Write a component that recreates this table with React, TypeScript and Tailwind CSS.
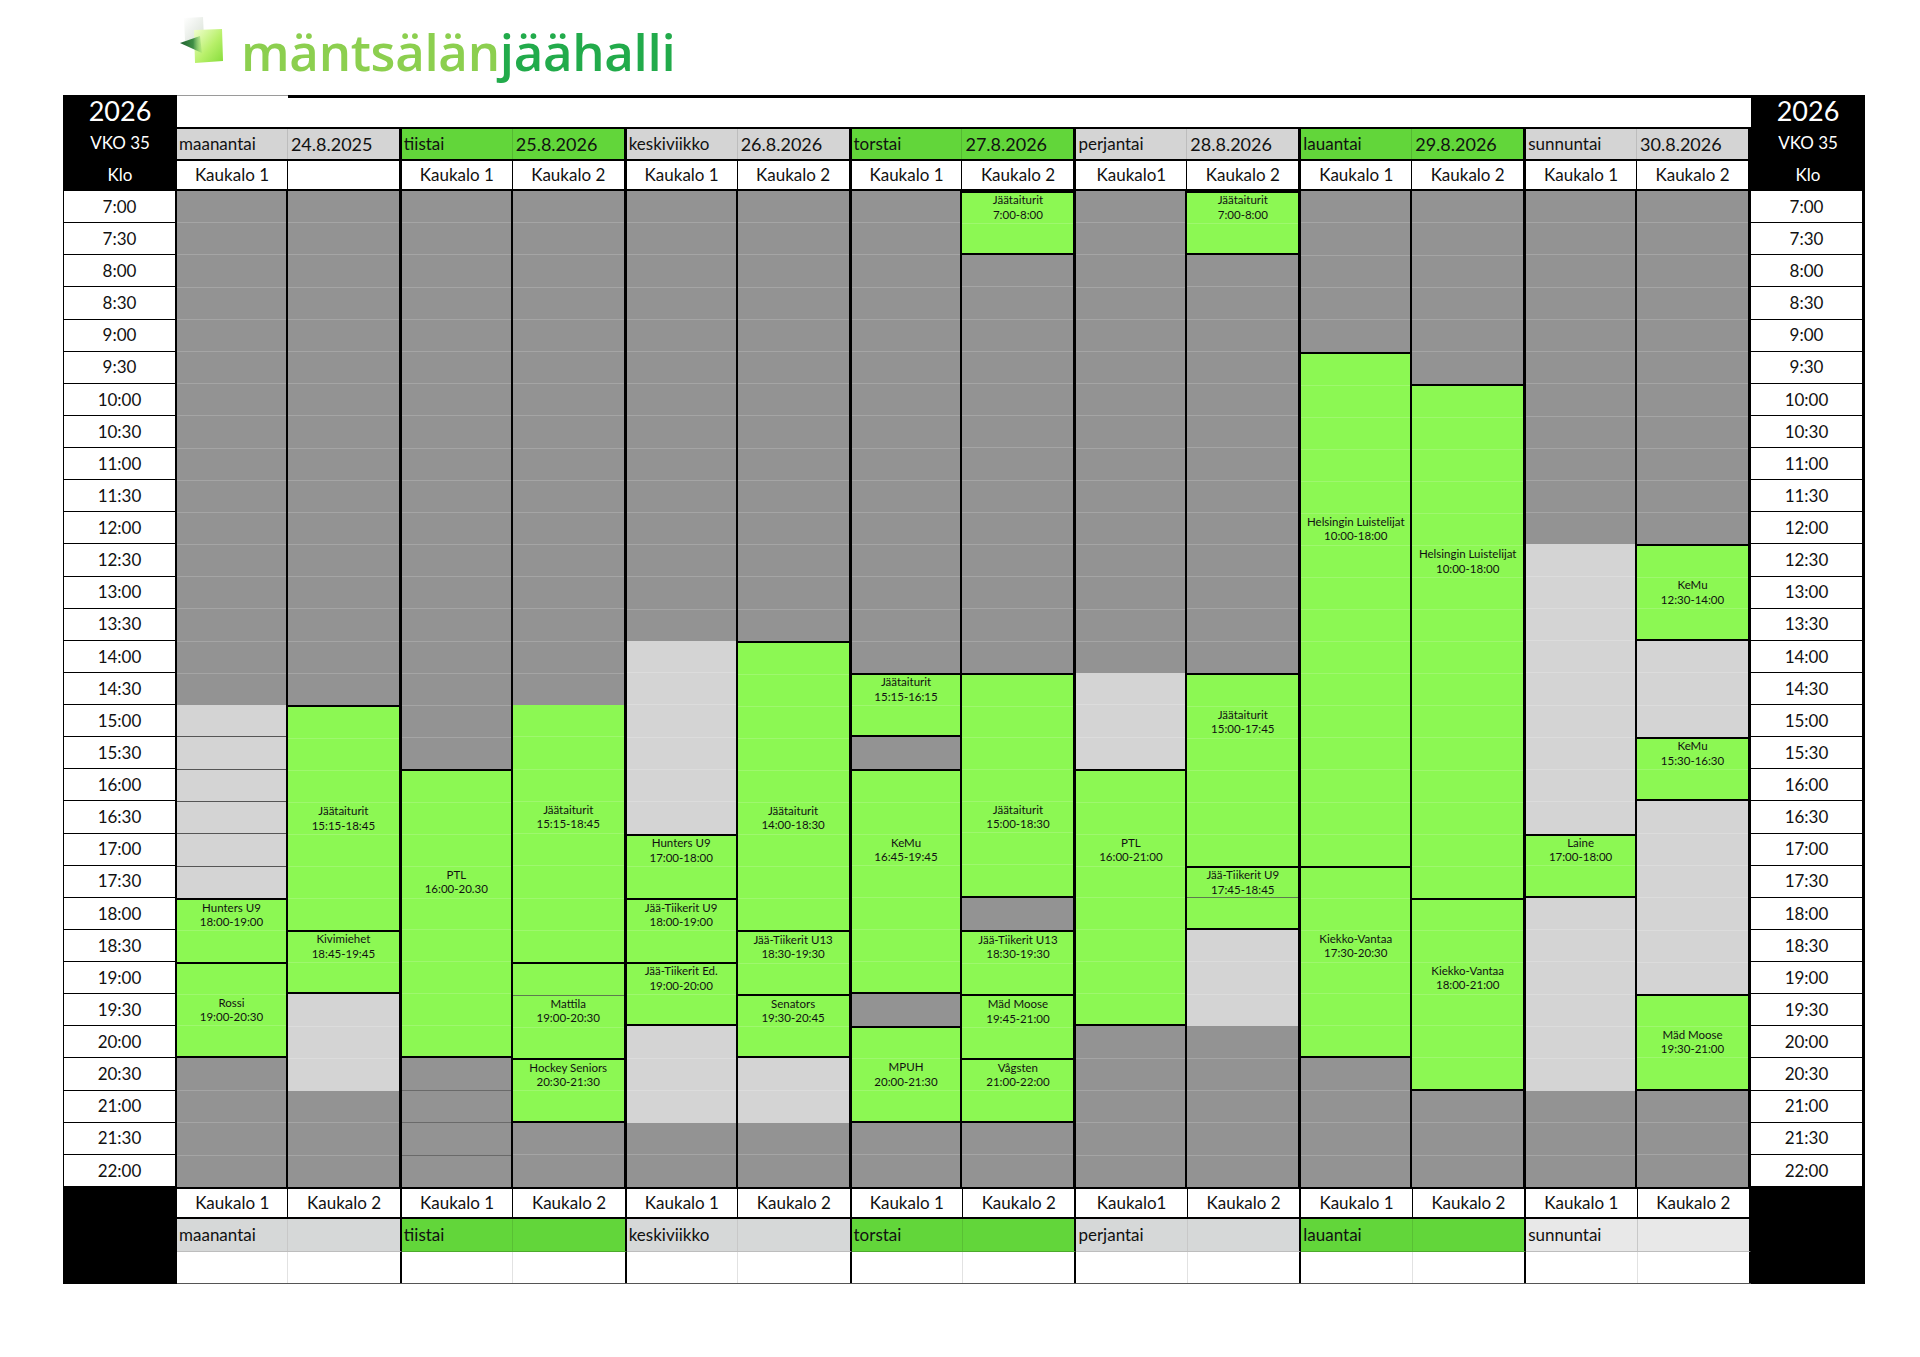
import React from "react";

const ROW = 32.13;

type Seg = {
  t: "c" | "f" | "b";
  n: number;
  name?: string;
  time?: string;
  k?: number;
  lines?: "dark";
  inner?: number;
  nt?: boolean;
};

// c = suljettu (tummanharmaa), f = vapaa (vaaleanharmaa), b = varattu (vihreä)
const c = (n: number, lines?: "dark"): Seg => ({ t: "c", n, lines });
const f = (n: number, lines?: "dark"): Seg => ({ t: "f", n, lines });
const b = (n: number, name: string, time: string, k = 0, extra: Partial<Seg> = {}): Seg => ({ t: "b", n, name, time, k, ...extra });

const days = [
  {
    name: "maanantai",
    date: "24.8.2025",
    green: false,
    top: ["Kaukalo 1", ""],
    cols: [
      [c(16), f(6, "dark"), b(2, "Hunters U9", "18:00-19:00"), b(3, "Rossi", "19:00-20:30", 1), c(4)],
      [c(16), b(7, "Jäätaiturit", "15:15-18:45", 3), b(2, "Kivimiehet", "18:45-19:45"), f(3), c(3)],
    ],
  },
  {
    name: "tiistai",
    date: "25.8.2026",
    green: true,
    top: ["Kaukalo 1", "Kaukalo 2"],
    cols: [
      [c(18), b(9, "PTL", "16:00-20.30", 3), c(4, "dark")],
      [
        c(16),
        b(8, "Jäätaiturit", "15:15-18:45", 3, { nt: true }),
        b(3, "Mattila", "19:00-20:30", 1, { inner: 1 }),
        b(2, "Hockey Seniors", "20:30-21:30"),
        c(2),
      ],
    ],
  },
  {
    name: "keskiviikko",
    date: "26.8.2026",
    green: false,
    top: ["Kaukalo 1", "Kaukalo 2"],
    cols: [
      [
        c(14),
        f(6),
        b(2, "Hunters U9", "17:00-18:00"),
        b(2, "Jää-Tiikerit U9", "18:00-19:00"),
        b(2, "Jää-Tiikerit Ed.", "19:00-20:00"),
        f(3),
        c(2),
      ],
      [c(14), b(9, "Jäätaiturit", "14:00-18:30", 5), b(2, "Jää-Tiikerit U13", "18:30-19:30"), b(2, "Senators", "19:30-20:45"), f(2), c(2)],
    ],
  },
  {
    name: "torstai",
    date: "27.8.2026",
    green: true,
    top: ["Kaukalo 1", "Kaukalo 2"],
    cols: [
      [c(15), b(2, "Jäätaiturit", "15:15-16:15"), c(1), b(7, "KeMu", "16:45-19:45", 2), c(1), b(3, "MPUH", "20:00-21:30", 1), c(2)],
      [
        b(2, "Jäätaiturit", "7:00-8:00"),
        c(13),
        b(7, "Jäätaiturit", "15:00-18:30", 4),
        c(1),
        b(2, "Jää-Tiikerit U13", "18:30-19:30"),
        b(2, "Mäd Moose", "19:45-21:00"),
        b(2, "Vågsten", "21:00-22:00"),
        c(2),
      ],
    ],
  },
  {
    name: "perjantai",
    date: "28.8.2026",
    green: false,
    top: ["Kaukalo1", "Kaukalo 2"],
    cols: [
      [c(15), f(3), b(8, "PTL", "16:00-21:00", 2), c(5)],
      [
        b(2, "Jäätaiturit", "7:00-8:00"),
        c(13),
        b(6, "Jäätaiturit", "15:00-17:45", 1),
        b(2, "Jää-Tiikerit U9", "17:45-18:45", 0, { inner: 1 }),
        f(3),
        c(5),
      ],
    ],
  },
  {
    name: "lauantai",
    date: "29.8.2026",
    green: true,
    top: ["Kaukalo 1", "Kaukalo 2"],
    cols: [
      [c(5), b(16, "Helsingin Luistelijat", "10:00-18:00", 5), b(6, "Kiekko-Vantaa", "17:30-20:30", 2), c(4)],
      [c(6), b(16, "Helsingin Luistelijat", "10:00-18:00", 5), b(6, "Kiekko-Vantaa", "18:00-21:00", 2), c(3)],
    ],
  },
  {
    name: "sunnuntai",
    date: "30.8.2026",
    green: false,
    top: ["Kaukalo 1", "Kaukalo 2"],
    cols: [
      [c(11), f(9), b(2, "Laine", "17:00-18:00"), f(6), c(3)],
      [c(11), b(3, "KeMu", "12:30-14:00", 1), f(3), b(2, "KeMu", "15:30-16:30"), f(6), b(3, "Mäd Moose", "19:30-21:00", 1), c(3)],
    ],
  },
];

const times = Array.from({ length: 31 }, (_, i) => `${7 + Math.floor(i / 2)}:${i % 2 ? "30" : "00"}`);

function Segment({ s, next }: { s: Seg; next?: Seg }) {
  const booked = s.t === "b";
  const bg = booked ? "bg-[#8cf853]" : s.t === "f" ? "bg-[#d4d4d4]" : "bg-[#939393]";
  let line = "border-[#a5a5a5]";
  if (s.t === "c" && s.lines === "dark") line = "border-[#6a6a6a]";
  if (s.t === "f") line = s.lines === "dark" ? "border-[#555555]" : "border-[#dcdcdc]";
  if (booked) line = "border-[#9ef86e]";
  const edges = booked
    ? `border-black ${s.nt ? "" : "border-t-2"} ${!next || next.t !== "b" ? "border-b-2" : ""}`
    : "";

  return (
    <div className={`flex flex-col ${bg} ${edges}`} style={{ height: s.n * ROW }}>
      {Array.from({ length: s.n }, (_, i) => (
        <div
          key={i}
          className={`flex-1 min-h-0 flex flex-col items-center justify-center overflow-visible ${
            i > 0 ? `border-t ${i === s.inner ? "border-[#5d7b4f]" : line}` : ""
          }`}
        >
          {booked && i === s.k && (
            <div className="flex flex-col items-center text-[11.5px] leading-[14.5px] text-[#111] whitespace-nowrap">
              <span>{s.name}</span>
              <span>{s.time}</span>
            </div>
          )}
        </div>
      ))}
    </div>
  );
}

function TimeColumn({ side }: { side: "left" | "right" }) {
  return (
    <div className="w-[114px] flex flex-col">
      <div className="bg-black text-white h-[96px] flex flex-col">
        <div className="h-[32px] flex items-center justify-center text-[27px]">2026</div>
        <div className="h-[32px] flex items-center justify-center text-[17px]">VKO 35</div>
        <div className="h-[32px] flex items-center justify-center text-[17px]">Klo</div>
      </div>
      <div className={`bg-white flex flex-col border-black ${side === "left" ? "border-l border-r-2" : "border-r-[3px]"}`}>
        {times.map((t) => (
          <div key={t} className="h-[32.13px] border-b border-black flex items-center justify-center text-[17px] text-[#111]">
            {t}
          </div>
        ))}
      </div>
      <div className="bg-black h-[97px]" />
    </div>
  );
}

function Logo() {
  return (
    <div className="h-[95px] flex items-start">
      <svg className="ml-[180px] mt-[17px]" width="44" height="46" viewBox="0 0 44 46">
        <defs>
          <linearGradient id="pale" x1="0" y1="0" x2="1" y2="1">
            <stop offset="0" stopColor="#ffffff" />
            <stop offset="1" stopColor="#d8e0d6" />
          </linearGradient>
          <linearGradient id="lime" x1="0" y1="0" x2="1" y2="1">
            <stop offset="0" stopColor="#f2ffd0" />
            <stop offset="0.55" stopColor="#b8f06a" />
            <stop offset="1" stopColor="#86dc3a" />
          </linearGradient>
          <linearGradient id="dark" x1="0" y1="0.5" x2="1" y2="0.5">
            <stop offset="0" stopColor="#1f5f30" />
            <stop offset="0.6" stopColor="#3f8f45" />
            <stop offset="1" stopColor="#7cc860" stopOpacity="0.2" />
          </linearGradient>
        </defs>
        <polygon points="4,1 23,0 24,22 5,24" fill="url(#pale)" />
        <polygon points="14,13 42,12 43,44 15,46" fill="url(#lime)" />
        <polygon points="0,26 20,19 22,36" fill="url(#dark)" />
      </svg>
      <div className="ml-[17px] mt-[26px] text-[51px] leading-none font-semibold font-['Open_Sans',sans-serif] tracking-[-0.3px]">
        <span className="text-[#8ccf4f]">mäntsälän</span>
        <span className="text-[#22ab4b]">jäähalli</span>
      </div>
    </div>
  );
}

export default function App() {
  return (
    <div className="w-[1920px] h-[1357px] bg-white font-['Lato',sans-serif] text-[#111]">
      <Logo />
      <div className="ml-[63px] flex">
        <TimeColumn side="left" />

        <div className="w-[1574px] flex flex-col">
          {/* ylärivi */}
          <div className="h-[32px] flex">
            <div className="w-[111px] border-t border-[#9a9a9a]" />
            <div className="flex-1 border-t-[3px] border-black" />
          </div>

          {/* päivät */}
          <div className="grid grid-cols-7 h-[32px] border-t-2 border-black">
            {days.map((d) => (
              <div key={d.name} className={`grid grid-cols-2 border-r-[3px] border-black ${d.green ? "bg-[#62d63a]" : "bg-[#d4d4d4]"}`}>
                <div className={`flex items-center pl-[2px] text-[17px] border-r ${d.green ? "border-[#55b833]" : "border-[#bdbdbd]"}`}>{d.name}</div>
                <div className="flex items-center pl-[3px] text-[18px]">{d.date}</div>
              </div>
            ))}
          </div>

          {/* kaukalot */}
          <div className="grid grid-cols-7 h-[32px] bg-white border-t-2 border-b-2 border-black">
            {days.map((d) => (
              <div key={d.name} className="grid grid-cols-2 border-r-[3px] border-black">
                <div className="flex items-center justify-center text-[17px] border-r border-black">{d.top[0]}</div>
                <div className="flex items-center justify-center text-[17px]">{d.top[1]}</div>
              </div>
            ))}
          </div>

          {/* aikataulu */}
          <div className="grid grid-cols-7 h-[996px]">
            {days.map((d) => (
              <div key={d.name} className="grid grid-cols-2 border-r-[3px] border-black">
                {d.cols.map((col, ci) => (
                  <div key={ci} className={`flex flex-col ${ci === 0 ? "border-r-2 border-black" : ""}`}>
                    {col.map((s, si) => (
                      <Segment key={si} s={s} next={col[si + 1]} />
                    ))}
                  </div>
                ))}
              </div>
            ))}
          </div>

          {/* alarivi kaukalot */}
          <div className="grid grid-cols-7 h-[32px] bg-white border-t-2 border-b-2 border-black">
            {days.map((d) => (
              <div key={d.name} className="grid grid-cols-2 border-r-2 border-black">
                <div className="flex items-center justify-center text-[17px] border-r border-black">{d.top[0] || "Kaukalo 1"}</div>
                <div className="flex items-center justify-center text-[17px]">{d.top[1] || "Kaukalo 2"}</div>
              </div>
            ))}
          </div>

          {/* alarivi päivät */}
          <div className="grid grid-cols-7 h-[33px]">
            {days.map((d) => (
              <div
                key={d.name}
                className={`grid grid-cols-2 border-r-2 border-black border-b ${
                  d.green ? "bg-[#62d63a] border-b-[#4caa2c]" : d.name === "sunnuntai" ? "bg-[#e8e8e8] border-b-[#bdbdbd]" : "bg-[#d6d8d8] border-b-[#bdbdbd]"
                }`}
              >
                <div className={`flex items-center pl-[2px] text-[17px] border-r ${d.green ? "border-r-[#58c034]" : "border-r-[#c8c8c8]"}`}>{d.name}</div>
                <div />
              </div>
            ))}
          </div>

          {/* tyhjä rivi */}
          <div className="grid grid-cols-7 h-[32px] bg-white border-b border-[#555555]">
            {days.map((d) => (
              <div key={d.name} className="grid grid-cols-2 border-r-2 border-black">
                <div className="border-r border-[#e2e2e2]" />
                <div />
              </div>
            ))}
          </div>
        </div>

        <TimeColumn side="right" />
      </div>
    </div>
  );
}
